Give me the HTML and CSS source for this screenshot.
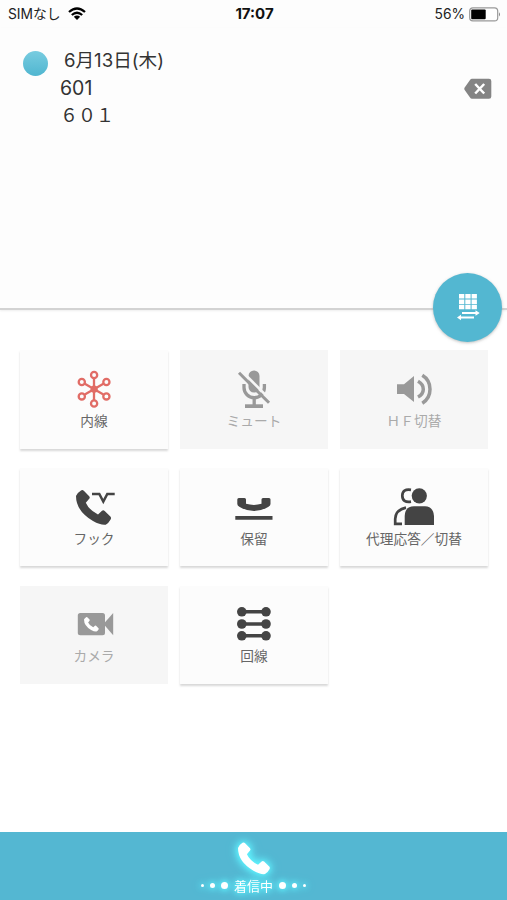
FILE: index.html
```html
<!DOCTYPE html>
<html lang="ja">
<head>
<meta charset="utf-8">
<title>Phone</title>
<link rel="stylesheet" href="styles.css">
</head>
<body>
<svg width="0" height="0" class="defs"><defs>
<path id="handset" d="M0 6Q.8 3 5 .4Q6.5-.5 7.8.8L13.2 6.2Q14.3 7.5 13.2 8.8L9.8 12.8Q13 20 22 24.4L26 20.8Q27.3 19.8 28.7 21L34.6 26.7Q35.5 28 34.6 29.5Q32.5 33.4 29.7 34.7Q25 35.5 17 31Q0 21 0 6Z"/>
</defs></svg>
<main class="screen">
  <header class="status">
    <div class="carrier"><span>SIMなし</span>
      <svg width="18" height="14" viewBox="0 0 18 14"><g fill="none" stroke="#000" stroke-width="2.3"><path d="M1 5Q9-2 17 5"/><path d="M3.8 8Q9 3.5 14.2 8"/></g><path d="M5.8 9.7Q9 7.2 12.2 9.7L9 13Z"/></svg>
    </div>
    <b class="clock">17:07</b>
    <div class="power"><span>56%</span>
      <svg width="32" height="15" viewBox="0 0 32 15"><rect x=".7" y=".9" width="28" height="13" rx="3.2" fill="#fff" stroke="#999" stroke-width="1.2"/><rect x="2.2" y="2.5" width="14.5" height="9.8" rx="1"/><path d="M30 5.2Q32 7.4 30 9.6Z" fill="#888"/></svg>
    </div>
  </header>
  <section class="display">
    <i class="dot"></i>
    <div class="info"><p class="date">6月13日(木)</p><p class="number">601</p><p class="name">６０１</p></div>
    <svg class="erase" width="28" height="22" viewBox="0 0 28 22"><path d="M8 .7H25Q27.3.7 27.3 3V18.5Q27.3 20.7 25 20.7H8Q6.8 20.7 6 19.5L.5 11.8Q0 10.7.5 9.7L6 2Q6.8.7 8 .7Z" fill="#848484"/><path d="M11.2 6L20.2 15.5M20.2 6L11.2 15.5" stroke="#fff" stroke-width="2.5"/></svg>
    <div class="fab"><svg width="69" height="69" viewBox="0 0 69 69"><g fill="#fff"><path d="M26 21h5.3v4.5h-5.3zM32.3 21h5.3v4.5h-5.3zM38.6 21h5.3v4.5h-5.3zM26 26.4h5.3v4.5h-5.3zM32.3 26.4h5.3v4.5h-5.3zM38.6 26.4h5.3v4.5h-5.3zM26 31.8h5.3v4.5h-5.3zM32.3 31.8h5.3v4.5h-5.3zM38.6 31.8h5.3v4.5h-5.3z"/><path d="M29 39H42.5V37.2L46.7 40L42.5 42.8V41H29ZM41 43.5H28V41.7L24 44.5L28 47.3V45.5H41Z"/></g></svg></div>
  </section>
  <section class="keys">
    <div class="key"><svg width="148" height="62" viewBox="0 0 148 62"><g fill="none" stroke="#e16c66" stroke-width="2.3"><path d="M74 28.5V50M64.8 33.7L83.4 44.4M83.4 33.7L64.8 44.4"/><circle cx="74.1" cy="25" r="3.1"/><circle cx="74.1" cy="53.5" r="3.1"/><circle cx="61.8" cy="32" r="3.1"/><circle cx="86.4" cy="32" r="3.1"/><circle cx="61.8" cy="46.4" r="3.1"/><circle cx="86.4" cy="46.4" r="3.1"/></g><circle cx="74.1" cy="39.2" r="3.6" fill="#e16c66"/></svg><span>内線</span></div>
    <div class="key off"><svg width="148" height="62" viewBox="0 0 148 62"><rect x="68.5" y="20.5" width="11" height="22" rx="5.5" fill="#999"/><path d="M64 34V37.5A10.2 10.2 0 0 0 84.4 37.5V34M74.2 48V56" fill="none" stroke="#999" stroke-width="3.3"/><path d="M65 54.3H83V58H65Z" fill="#999"/><path d="M61 20.3L91.3 50.6" stroke="#f6f6f6" stroke-width="2.7"/><path d="M59 22.8L89 52.8" stroke="#999" stroke-width="3"/></svg><span>ミュート</span></div>
    <div class="key off"><svg width="148" height="62" viewBox="0 0 148 62"><path d="M57 34.3H64L74 26V52L64 44H57Z" fill="#999"/><g fill="none" stroke="#999" stroke-width="3.5"><path d="M78 31.3Q83.3 34.3 83.3 39.2T78 47"/><path d="M82.3 25.3Q90 30 90 39.2T82.3 53.2"/></g></svg><span>ＨＦ切替</span></div>
    <div class="key"><svg width="148" height="62" viewBox="0 0 148 62"><use href="#handset" x="56" y="22" fill="#444"/><path d="M72 26H79.3L83.3 33.5L87.3 26H94.7" fill="none" stroke="#444" stroke-width="2.5"/></svg><span>フック</span></div>
    <div class="key"><svg width="148" height="62" viewBox="0 0 148 62"><path d="M58.8 30H64.5Q66 30 66 31.5V35.8Q74 38 81.5 35.8V31.5Q81.5 30 83 30H89Q90.5 30 90.5 31.5V36Q90.5 37.6 88.5 38.7Q74 47.5 59.3 38.7Q57.3 37.6 57.3 36V31.5Q57.3 30 58.8 30ZM55.3 48H92.5V51.8H55.3Z" fill="#444"/></svg><span>保留</span></div>
    <div class="key"><svg width="148" height="62" viewBox="0 0 148 62"><circle cx="79.3" cy="27.8" r="7.6" fill="#444"/><path d="M64.7 57V48Q65 38.3 74 38.3H85Q93.5 38.8 94 48V57Z" fill="#444"/><g fill="none" stroke="#444" stroke-width="2.7"><path d="M71 21.8Q62.5 20.5 62.3 27.6Q62.5 35 71 33.7M66 39.6Q55.2 42 55.2 51V55.8H62"/></g></svg><span>代理応答／切替</span></div>
    <div class="key off"><svg width="148" height="62" viewBox="0 0 148 62"><rect x="57.8" y="27" width="27.2" height="22.3" rx="2.5" fill="#999"/><path d="M93.2 27V49.3L83.5 38Z" fill="#999"/><use href="#handset" transform="translate(64 31) scale(.42)" fill="#fff"/></svg><span>カメラ</span></div>
    <div class="key"><svg width="148" height="62" viewBox="0 0 148 62"><path d="M62 25.8H86M62 38H86M62 49.8H86" stroke="#444" stroke-width="3.4"/><g fill="#444"><circle cx="61.8" cy="25.8" r="4.8"/><circle cx="86" cy="25.8" r="4.8"/><circle cx="61.8" cy="38" r="4.8"/><circle cx="86" cy="38" r="4.8"/><circle cx="61.8" cy="49.8" r="4.8"/><circle cx="86" cy="49.8" r="4.8"/></g></svg><span>回線</span></div>
  </section>
  <footer class="incoming">
    <svg width="40" height="44" viewBox="0 0 40 44"><use href="#handset" transform="translate(4 10.5) scale(.91)" fill="#fff"/></svg>
    <div class="ring"><i class="s"></i><i class="m"></i><i class="l"></i><span>着信中</span><i class="l"></i><i class="m"></i><i class="s"></i></div>
  </footer>
</main>
</body>
</html>
```
FILE: styles.css
```css
* { box-sizing: border-box; }
body { margin: 0; background: #fff; font-family: Inter, "Noto Sans CJK JP", sans-serif; }
p { margin: 0; }
.defs { display: block; }
.screen { height: 900px; display: flex; flex-direction: column; }
.status { height: 28px; display: grid; grid-template-columns: 1fr auto 1fr; align-items: center; padding: 0 6px 0 8px; font-size: 13.8px; line-height: 20px; color: #222; background: #fdfdfd; }
.carrier, .power { display: flex; align-items: center; gap: 7px; white-space: nowrap; }
.power { justify-content: flex-end; gap: 4px; }
.clock { font-size: 15px; color: #111; }
.display { position: relative; height: 282px; display: flex; align-items: flex-start; background: #fdfdfd; border-bottom: 2px solid #d3d3d3; box-shadow: 0 1px 2px #eee; padding: 0 15px 0 23px; }
.dot { width: 25px; height: 25px; margin-top: 23px; border-radius: 50%; background: linear-gradient(#78cce0, #50b6d0); }
.info { flex: 1; margin: 18px 0 0 12px; color: #333; line-height: 28px; }
.date { font-size: 18.6px; padding-left: 4px; }
.number { font-size: 19.5px; }
.name { font-size: 18px; }
.erase { margin-top: 50px; }
.fab { position: absolute; right: 5px; bottom: -34px; width: 69px; height: 69px; border-radius: 50%; background: #53b7d1; box-shadow: 0 1px 3px #8888; }
.fab svg { display: block; }
.keys { flex: 1; display: grid; grid-template-columns: repeat(3, 148px); grid-auto-rows: 98px; gap: 20px 12px; padding: 40px 0 0 20px; align-content: start; }
.key { background: #fcfcfc; box-shadow: 0 1.5px 2px #d8d8d8; display: flex; flex-direction: column; align-items: center; font-size: 13.7px; line-height: 18px; color: #666; }
.key.off { background: #f6f6f6; color: #aaa; box-shadow: none; }
.key svg { display: block; }
.key:nth-child(-n+3) { height: 99px; }
.key:nth-child(n+7) span { margin-top: -1px; }
.incoming { height: 68px; background: #54b7d2; display: flex; flex-direction: column; align-items: center; }
.incoming svg { filter: drop-shadow(0 0 4px #5ff4ff) drop-shadow(0 0 3px #5ff4ff); }
.ring { display: flex; align-items: center; gap: 6px; height: 20px; margin-top: -1px; color: #fff; font-size: 13px; filter: drop-shadow(0 0 3px #5ff4ff) drop-shadow(0 0 3px #5ff4ff); }
.ring i { border-radius: 50%; background: #fff; }
.s { width: 3px; height: 3px; }
.m { width: 5px; height: 5px; }
.l { width: 7px; height: 7px; }
```
